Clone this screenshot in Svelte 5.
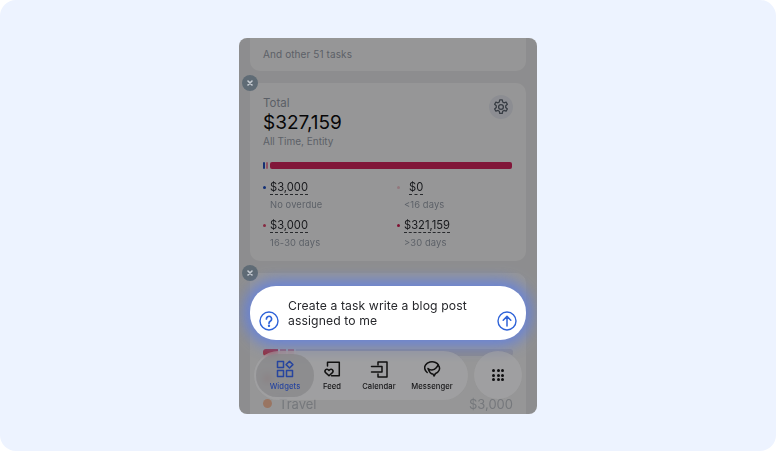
<script>
  const stats = [
    { value: "$3,000", label: "No overdue", dot: "#1e4fc4" },
    { value: "$0", label: "<16 days", dot: "#f4c6d0", indent: true },
    { value: "$3,000", label: "16-30 days", dot: "#e0466e" },
    { value: "$321,159", label: ">30 days", dot: "#d41a52" }
  ];
</script>

<main class="page">
  <div class="phone">
    <div class="content">
      <section class="card tasks">
        <p>And other 51 tasks</p>
      </section>

      <section class="card total">
        <div class="total-head">
          <div>
            <div class="caption">Total</div>
            <div class="amount">$327,159</div>
            <div class="period">All Time, Entity</div>
          </div>
          <button class="gear" aria-label="Settings">
            <svg width="18" height="18" viewBox="0 0 24 24" fill="none" stroke="#5c6470" stroke-width="1.7" stroke-linejoin="round">
              <path d="M10.3 2.5h3.4l.6 2.9 1.7 1 2.8-.9 1.7 2.9-2.2 2v2.2l2.2 2-1.7 2.9-2.8-.9-1.7 1-.6 2.9h-3.4l-.6-2.9-1.7-1-2.8.9-1.7-2.9 2.2-2v-2.2l-2.2-2 1.7-2.9 2.8.9 1.7-1z" />
              <circle cx="12" cy="12" r="3.2" />
            </svg>
          </button>
        </div>

        <div class="bar">
          <span class="seg blue"></span>
          <span class="seg pink"></span>
          <span class="seg crimson"></span>
        </div>

        <div class="stats">
          {#each stats as s}
            <div class="stat">
              <span class="dot" style="background: {s.dot}"></span>
              <div>
                <div class="value" class:indent={s.indent}><span>{s.value}</span></div>
                <div class="label">{s.label}</div>
              </div>
            </div>
          {/each}
        </div>
      </section>

      <section class="card list">
        <div class="strip">
          <span class="strip-red"></span>
          <span class="strip-pale"></span>
          <span class="strip-pale"></span>
          <span class="strip-rest"></span>
        </div>
        <div class="row hidden-row">
          <span class="row-dot red"></span>
        </div>
        <div class="row">
          <span class="row-dot"></span>
          <span class="row-name">Travel</span>
          <span class="row-value">$3,000</span>
        </div>
      </section>
    </div>

    <div class="scrim"></div>

    <span class="close first">
      <svg width="8" height="8" viewBox="0 0 8 8" stroke="#c9ced4" stroke-width="1.6" stroke-linecap="round"><path d="M2 2l4 4M6 2l-4 4" /></svg>
    </span>
    <span class="close second">
      <svg width="8" height="8" viewBox="0 0 8 8" stroke="#c9ced4" stroke-width="1.6" stroke-linecap="round"><path d="M2 2l4 4M6 2l-4 4" /></svg>
    </span>

    <div class="prompt">
      <svg class="prompt-icon" width="20" height="20" viewBox="0 0 20 20" fill="none" stroke="#2f63d8" stroke-width="1.4" stroke-linecap="round">
        <circle cx="10" cy="10" r="9" />
        <path d="M7.4 7.9a2.6 2.6 0 1 1 4.1 2.1c-.9.6-1.5 1.1-1.5 2.2" stroke-width="1.7" />
        <circle cx="10" cy="14.8" r=".5" fill="#2f63d8" />
      </svg>
      <p>Create a task write a blog post assigned to me</p>
      <svg class="prompt-icon" width="20" height="20" viewBox="0 0 20 20" fill="none" stroke="#2f63d8" stroke-width="1.4" stroke-linecap="round" stroke-linejoin="round">
        <circle cx="10" cy="10" r="9" />
        <path d="M10 15V5.5M6.2 9.2 10 5.4l3.8 3.8" stroke-width="1.5" />
      </svg>
    </div>

    <nav class="nav">
      <div class="tabs">
        <div class="tab active">
          <svg width="18" height="18" viewBox="0 0 18 18" fill="none" stroke="#27459f" stroke-width="1.5" stroke-linejoin="round">
            <rect x="1.5" y="1.5" width="6" height="6" />
            <path d="M13.5 1.2l3.4 3.4-3.4 3.4-3.4-3.4z" />
            <rect x="1.5" y="10.5" width="6" height="6" />
            <rect x="10.5" y="10.5" width="6" height="6" />
          </svg>
          <span>Widgets</span>
        </div>
        <div class="tab feed">
          <svg width="18" height="18" viewBox="0 0 18 18" fill="none" stroke="#111" stroke-width="1.5" stroke-linejoin="round" stroke-linecap="round">
            <path d="M4.5 6V2.2h11.8v13.5H8.5" />
            <path d="M6 15.8 2.6 12.6a2 2 0 0 1 0-2.8 1.9 1.9 0 0 1 2.7 0l.7.7.7-.7a1.9 1.9 0 0 1 2.7 0 2 2 0 0 1 0 2.8z" />
          </svg>
          <span>Feed</span>
        </div>
        <div class="tab">
          <svg width="18" height="18" viewBox="0 0 18 18" fill="none" stroke="#111" stroke-width="1.5" stroke-linejoin="round" stroke-linecap="round">
            <path d="M8 5V2h9v15H8v-3" />
            <path d="M1.500 6.500H12v5.500H1.500" />
          </svg>
          <span>Calendar</span>
        </div>
        <div class="tab messenger">
          <svg width="18" height="18" viewBox="0 0 18 18" fill="none" stroke="#111" stroke-width="1.5" stroke-linejoin="round" stroke-linecap="round">
            <path d="M4.2 12.5C1.5 10.5 1 7 2.5 5 4.5 2 9 1 12.5 2.5c1.600.7 2.500 1.500 3 2.500" />
            <path d="M5 8.500c2 2 6 2 8-.5 1.500-1.500 2-3 2-3 1.500 1.500 2 3.500 1 5.500-.7 1.500-2 2.500-3.500 3L11 16l-1-2c-2 0-3.500-1-5-5.500z" />
          </svg>
          <span>Messenger</span>
        </div>
      </div>
      <div class="more" aria-label="More">
        {#each Array(9) as _}
          <i></i>
        {/each}
      </div>
    </nav>
  </div>
</main>

<style>
:global(body) {
  margin: 0;
  background: #fff;
}

.page {
  width: 776px;
  height: 451px;
  box-sizing: border-box;
  padding-top: 38px;
  display: flex;
  justify-content: center;
  align-items: flex-start;
  border-radius: 16px;
  background: #edf3ff;
  font-family: Inter, "Liberation Sans", sans-serif;
}

.phone {
  position: relative;
  width: 298px;
  height: 376px;
  border-radius: 8px;
  overflow: hidden;
  background: #ececee;
  filter: blur(0.3px);
}

.content {
  display: flex;
  flex-direction: column;
  gap: 12px;
  padding: 0 11px;
}

.card {
  background: #fbfbfc;
  border-radius: 10px;
  padding: 0 13px;
}

.tasks {
  height: 33px;
  border-radius: 0 0 10px 10px;
}

.tasks p {
  margin: 0;
  padding-top: 10px;
  font-size: 10px;
  line-height: 13px;
  letter-spacing: 0.1px;
  color: #9aa1ad;
}

.total {
  height: 178px;
  padding-top: 13px;
  box-sizing: border-box;
}

.total-head {
  display: flex;
  justify-content: space-between;
}

.caption {
  font-size: 11.5px;
  line-height: 15px;
  color: #989fab;
}

.amount {
  font-size: 19px;
  line-height: 24px;
  color: #0c0c0e;
}

.period {
  font-size: 10px;
  line-height: 13px;
  color: #9aa1ad;
}

.gear {
  width: 24px;
  height: 24px;
  margin: -1px 0 0;
  padding: 0;
  border: 0;
  border-radius: 50%;
  background: #e9ecf4;
  display: flex;
  align-items: center;
  justify-content: center;
}

.bar {
  display: flex;
  gap: 1px;
  height: 7px;
  margin-top: 14px;
  margin-right: 1px;
}

.seg {
  border-radius: 1px;
}

.blue {
  width: 2px;
  background: #2450c0;
}

.pink {
  width: 2px;
  margin-right: 1px;
  background: #f28ba6;
}

.crimson {
  flex: 1;
  border-radius: 2px;
  background: #d8265f;
}

.stats {
  display: grid;
  grid-template-columns: 134px 1fr;
  row-gap: 7px;
  margin-top: 11px;
}

.stat {
  display: flex;
  gap: 4px;
}

.dot {
  width: 3px;
  height: 3px;
  margin-top: 6px;
  border-radius: 50%;
  flex: none;
}

.value {
  font-size: 11.2px;
  line-height: 15px;
  color: #2b2d33;
}

.value span {
  border-bottom: 1px dashed #44464c;
}

.value.indent {
  padding-left: 5px;
}

.label {
  font-size: 9.4px;
  line-height: 13px;
  margin-top: 3px;
  letter-spacing: 0.1px;
  color: #9aa1ad;
}

.list {
  height: 200px;
  padding: 76px 13px 0;
  box-sizing: border-box;
}

.strip {
  display: flex;
  gap: 2px;
  height: 7px;
}

.strip-red {
  width: 15px;
  border-radius: 3px 0 0 3px;
  background: #f4566e;
}

.strip-pale {
  width: 6px;
  background: #f5a9b6;
}

.strip-rest {
  flex: 1;
  border-radius: 0 3px 3px 0;
  background: #e4e4f2;
}

.row {
  display: flex;
  align-items: center;
  gap: 7px;
  height: 15px;
  font-size: 13px;
  color: #c4c8cf;
}

.hidden-row {
  margin-top: 15px;
}

.hidden-row + .row {
  margin-top: 10px;
}

.row-dot {
  width: 9px;
  height: 9px;
  border-radius: 50%;
  background: #ffc4a4;
}

.row-dot.red {
  background: #f07a80;
}

.row-value {
  margin-left: auto;
}

.scrim {
  position: absolute;
  inset: 0;
  background: rgba(0, 0, 0, 0.4);
}

.close {
  position: absolute;
  left: 3px;
  width: 16px;
  height: 16px;
  border-radius: 50%;
  background: #5f6b75;
  display: flex;
  align-items: center;
  justify-content: center;
}

.close.first {
  top: 37px;
}

.close.second {
  top: 227px;
}

.prompt {
  position: absolute;
  left: 11px;
  top: 248px;
  width: 276px;
  height: 54px;
  box-sizing: border-box;
  padding: 0 9px 9px;
  display: flex;
  align-items: flex-end;
  background: #fff;
  border-radius: 26px;
  box-shadow: 0 0 14px 6px rgba(96, 128, 226, 0.85);
}

.prompt-icon {
  flex: none;
}

.prompt p {
  flex: 1;
  margin: 0 0 3px;
  padding: 0 18px 0 9px;
  font-size: 12.2px;
  line-height: 15px;
  letter-spacing: 0.1px;
  color: #27282c;
}

.nav {
  position: absolute;
  left: 15px;
  top: 313px;
  display: flex;
  gap: 6px;
}

.tabs {
  width: 214px;
  height: 49px;
  box-sizing: border-box;
  padding: 3px 2px;
  display: flex;
  align-items: stretch;
  border-radius: 25px;
  background: rgba(170, 170, 172, 0.45);
  backdrop-filter: blur(3px);
}

.tab {
  width: 58px;
  display: flex;
  flex-direction: column;
  align-items: center;
  justify-content: center;
  gap: 3px;
  font-size: 7.6px;
  font-weight: 500;
  line-height: 11px;
  color: #141416;
  letter-spacing: 0.1px;
}

.tab.active {
  border-radius: 21px;
  color: #27459f;
  background: rgba(135, 135, 137, 0.75);
}

.feed {
  width: 36px;
}

.messenger {
  width: 48px;
}

.more {
  width: 48px;
  height: 48px;
  box-sizing: border-box;
  border-radius: 50%;
  background: rgba(170, 170, 172, 0.45);
  backdrop-filter: blur(3px);
  display: grid;
  grid-template-columns: repeat(3, 3px);
  grid-auto-rows: 3px;
  gap: 1.5px;
  justify-content: center;
  align-content: center;
}

.more i {
  border-radius: 50%;
  background: #0e0e10;
}
</style>
